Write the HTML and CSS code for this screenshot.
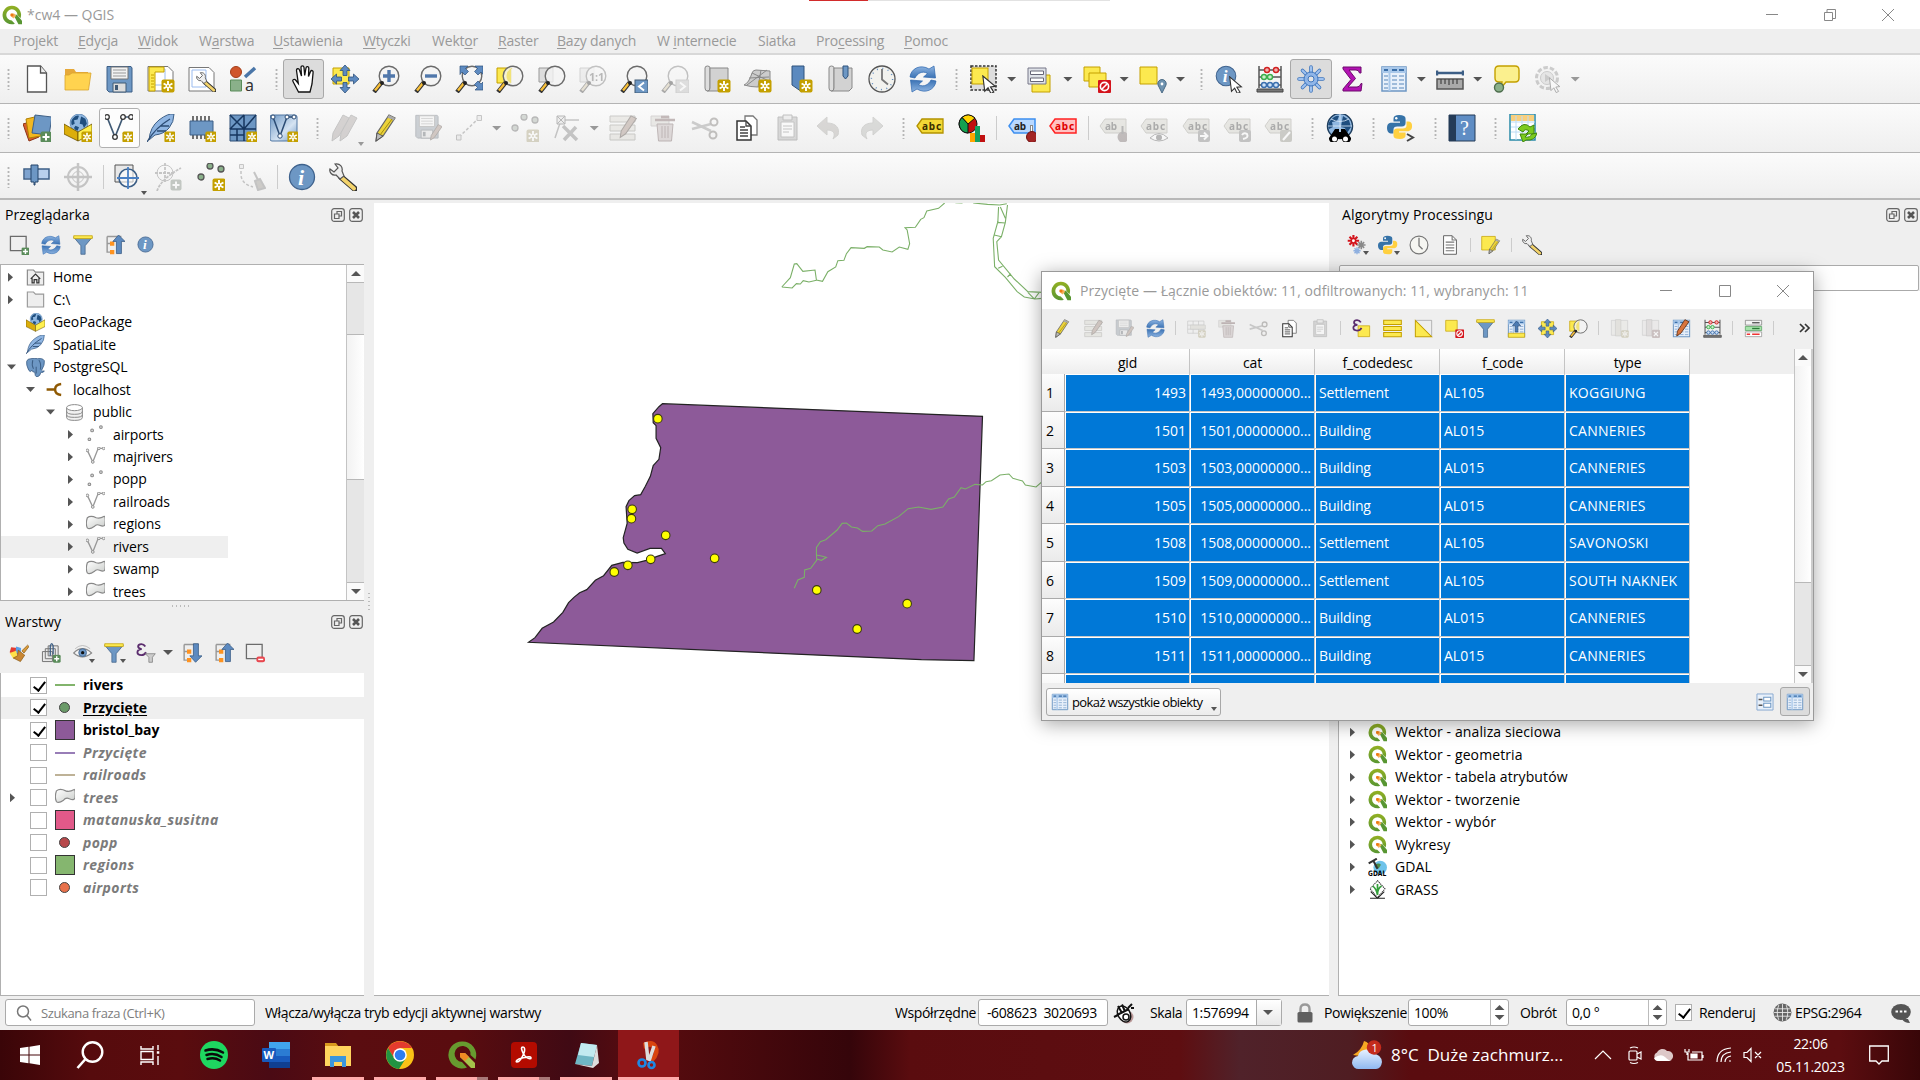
FILE: index.html
```html
<!DOCTYPE html>
<html lang="pl">
<head>
<meta charset="utf-8">
<title>*cw4 — QGIS</title>
<link rel="stylesheet" href="styles.css">
</head>
<body>
<svg class="grads" aria-hidden="true">
<defs>
<linearGradient id="gq" x1="0" y1="0" x2="0" y2="1"><stop offset="0" stop-color="#93b023"/><stop offset="1" stop-color="#589632"/></linearGradient>
<linearGradient id="gb" x1="0" y1="0" x2="0" y2="1"><stop offset="0" stop-color="#8fb5e2"/><stop offset="1" stop-color="#3a72b4"/></linearGradient>
<linearGradient id="gv" x1="0" y1="0" x2="1" y2="1"><stop offset="0" stop-color="#6d97c4"/><stop offset=".6" stop-color="#d5e3f2"/><stop offset="1" stop-color="#6d97c4"/></linearGradient>
<linearGradient id="gg" x1="0" y1="0" x2="1" y2="1"><stop offset="0" stop-color="#fff"/><stop offset="1" stop-color="#c9ccc9"/></linearGradient>
<linearGradient id="gc" x1="0" y1="0" x2="0" y2="1"><stop offset="0" stop-color="#e6f1ff"/><stop offset="1" stop-color="#8fb8f0"/></linearGradient>
</defs>
</svg>
<svg class="defs" aria-hidden="true">
<symbol id="star" viewBox="0 0 14 14"><rect x=".5" y=".5" width="13" height="13" rx="2" fill="#c4a000"/><path d="M7 2v10M2.6 4.5l8.8 5M11.4 4.5l-8.8 5" stroke="#fff" stroke-width="1.9"/><circle cx="7" cy="7" r="1" fill="#c4a000"/></symbol>
<symbol id="plus" viewBox="0 0 12 12"><rect x=".5" y=".5" width="11" height="11" rx="2" fill="#5a8c5a"/><path d="M6 2.5v7M2.5 6h7" stroke="#fff" stroke-width="2"/></symbol>
<symbol id="no" viewBox="0 0 12 12"><rect width="12" height="12" rx="1" fill="#d4141c"/><circle cx="6" cy="6" r="3.8" fill="none" stroke="#fff" stroke-width="1.5"/><path d="M3.5 8.5l5-5" stroke="#fff" stroke-width="1.5"/></symbol>
<symbol id="cur" viewBox="0 0 16 20"><path d="M1 1l13 11-5 .5 3.5 5.5-3 1.5-3-6L3 17z" fill="#fff" stroke="#333" stroke-width="1.2"/></symbol>
<symbol id="lens" viewBox="0 0 28 28"><path d="M10 17L2 27" stroke="#333" stroke-width="4.4"/><path d="M9 18L3 25.5" stroke="#f8c03a" stroke-width="2.4"/><circle cx="17" cy="11" r="9.8" fill="#f4f4f4" fill-opacity=".8" stroke="#6b6b6b" stroke-width="1.4"/><circle cx="10" cy="18" r="2" fill="#222"/></symbol>
<symbol id="qgis" viewBox="0 0 28 28"><path fill="url(#gq)" fill-rule="evenodd" d="M14 1a13 13 0 1 0 4 25.300l-4.300-4.600A7.800 7.800 0 1 1 21.600 14l4.300 4.500A13 13 0 0 0 14 1z"/><path d="M16 13.500h5L28 22v5h-5z" fill="#589632"/><path d="M12 12h5l3 3-4 4-4-4z" fill="#f7b15c"/><circle cx="14" cy="14" r="2.200" fill="#ee7913"/></symbol>
<symbol id="new" viewBox="0 0 28 28"><path d="M4.500 1h13l6 7v19h-19z" fill="#fff" stroke="#555" stroke-width="1.300"/><path d="M17.500 1v7h6" fill="#eee" stroke="#555" stroke-width="1.300"/></symbol>
<symbol id="open" viewBox="0 0 28 28"><path d="M1 4h9l2 3h12v5H6L1 24z" fill="#e6a93a"/><path d="M1 25V10h4l3-2h19l-2.500 17z" fill="#ffd34f" stroke="#d9a52c" stroke-width=".8"/></symbol>
<symbol id="save" viewBox="0 0 28 28"><path d="M2 1.500h24l1 1.500v24H4l-2-2z" fill="#6d97c4" stroke="#3d5f86"/><path d="M6 2h17v12H6z" fill="#f2f2f2" stroke="#777"/><path d="M8 5h13M8 8h13M8 11h13" stroke="#999"/><path d="M8 18h13v9H8z" fill="#ddd" stroke="#415a75"/><path d="M10 20h3v5h-3z" fill="#415a75"/></symbol>
<symbol id="layout" viewBox="0 0 28 28"><path d="M1 1.500h20l5 5V26H1z" fill="#fff" stroke="#777"/><path d="M4 4h14v16H4z" fill="none" stroke="#9bbcf0"/><path d="M2 2h15v5H8v19H2z" fill="#fce94f" stroke="#c4a000"/><path d="M4 10h3M4 13h3M4 16h3M4 19h3M4 22h3" stroke="#c4a000"/><use href="#star" x="14" y="14" width="14" height="14"/></symbol>
<symbol id="wrench" viewBox="0 0 28 28"><path d="M12 14l14 12" stroke="#333" stroke-width="6" stroke-linecap="round"/><path d="M13 15l12 10.500" stroke="#f3d36b" stroke-width="3.800" stroke-linecap="round"/><path d="M6 1c5-1 8 3 7 7l2 5-4 3-4-4c-4 1-7-3-6-6l4 3 4-4z" fill="#eee" stroke="#555" stroke-width="1.200"/></symbol>
<symbol id="manager" viewBox="0 0 28 28"><path d="M1 2.500h20l5 5V26H1z" fill="#fff" stroke="#777"/><path d="M4 5h14v17H4z" fill="none" stroke="#9bbcf0"/><use href="#wrench" x="8" y="7" width="20" height="20"/></symbol>
<symbol id="style" viewBox="0 0 28 28"><circle cx="7" cy="7" r="5.500" fill="#d0562b" stroke="#a33d18"/><path d="M16 12L26 3" stroke="#4a76a8" stroke-width="3.500"/><path d="M1.500 15h11v11h-11z" fill="#8ab08a" stroke="#5a8c5a"/><text x="16" y="25.500" font-family="Noto Sans,sans-serif" font-size="16" fill="#333">a</text></symbol>
<symbol id="hand" viewBox="0 0 28 28"><path d="M8.500 27L3 16.500c-1-2 1.500-3 3-1l2.300 3L6.500 5.500c-.3-2 2.300-2.500 3-.5L11.500 11 11 2.500c0-2.200 2.800-2.200 3 0l.7 8L16 3c.3-2 3-1.700 2.800.5L18.500 11.500l2-5c.8-1.800 3-1 2.600 1L22 19l-2 8z" fill="#fff" stroke="#111" stroke-width="1.300"/></symbol>
<symbol id="arrows4" viewBox="0 0 28 28"><g fill="#5d8ac0" stroke="#2f527c" stroke-width=".8"><path d="M14 0l5 5.500h-3v5h-4v-5H9z"/><path d="M14 28l5-5.500h-3v-5h-4v5H9zM0 14l5.500-5v3h5v4h-5v3zM28 14l-5.500-5v3h-5v4h5v3z"/></g></symbol>
<symbol id="pansel" viewBox="0 0 28 28"><path d="M2 3h16v16H2z" fill="#fce94f" stroke="#c4a000"/><use href="#arrows4"/></symbol>
<symbol id="pansel2" viewBox="0 0 28 28"><path d="M5 4h18v19H5z" fill="#fce94f" stroke="#c4a000"/><use href="#arrows4"/></symbol>
<symbol id="zin" viewBox="0 0 28 28"><use href="#lens"/><path d="M17 5v12M11 11h12" stroke="#5077ab" stroke-width="3.400"/></symbol>
<symbol id="zout" viewBox="0 0 28 28"><use href="#lens"/><path d="M11 11h12" stroke="#5077ab" stroke-width="3.400"/></symbol>
<symbol id="zfull" viewBox="0 0 28 28"><use href="#lens"/><g fill="#5d8ac0" stroke="#2f527c" stroke-width=".7"><path d="M5 1h8l-2.500 2.500 3 3-3.500 3.500-3-3L5 9.500zM28 1h-8l2.500 2.500-3 3L23 10l3-3 2 2.500zM28 25h-8l2.500-2.500-3-3L23 16l3 3 2-2z"/></g></symbol>
<symbol id="zsel" viewBox="0 0 28 28"><path d="M1 3h14v15H1z" fill="#fce94f" stroke="#c4a000"/><use href="#lens"/><path d="M17 3a8 8 0 0 0-2 15V3z" fill="#f1e379"/></symbol>
<symbol id="zlay" viewBox="0 0 28 28"><path d="M1 3h14v14H1z" fill="#ddd" stroke="#999"/><use href="#lens"/></symbol>
<symbol id="z11" viewBox="0 0 28 28"><path d="M1 3h14v14H1z" fill="#ddd" stroke="#999"/><use href="#lens"/><text x="10" y="15.500" font-family="Noto Sans,sans-serif" font-weight="bold" font-size="11" fill="#555">1:1</text></symbol>
<symbol id="zlast" viewBox="0 0 28 28"><use href="#lens"/><rect x="15" y="15" width="13" height="13" fill="#6d97c4" stroke="#415a75"/><path d="M24 17.500l-5 4 5 4" fill="none" stroke="#fff" stroke-width="2"/></symbol>
<symbol id="znext" viewBox="0 0 28 28"><use href="#lens"/><rect x="15" y="15" width="13" height="13" fill="#bbb" stroke="#999"/><path d="M19 17.500l5 4-5 4" fill="none" stroke="#fff" stroke-width="2"/></symbol>
<symbol id="map" viewBox="0 0 28 28"><path d="M2 3q0-2 2.500-2T7 3v20q0 3-2.500 3T2 23z" fill="#ddd" stroke="#888"/><path d="M7 3h18v20l-3 3H4.500q2.500 0 2.500-3z" fill="#d2d2d2" stroke="#888"/></symbol>
<symbol id="newmap" viewBox="0 0 28 28"><use href="#map"/><use href="#star" x="14" y="14" width="14" height="14"/></symbol>
<symbol id="new3d" viewBox="0 0 28 28"><path d="M0 20q5-2 8-12 1-3 4-3l14 1v14q-12 4-26 0z" fill="#ccc" stroke="#888"/><path d="M5 13l20-1M8 8l17 8M17 5l-3 17M3 20l20-15" stroke="#888" fill="none"/><use href="#star" x="14" y="14" width="14" height="14"/></symbol>
<symbol id="bookm" viewBox="0 0 28 28"><path d="M7 1h12v24l-2 2-10-7z" fill="#5b89bf" stroke="#2f527c"/><use href="#star" x="14" y="14" width="14" height="14"/></symbol>
<symbol id="mapbook" viewBox="0 0 28 28"><use href="#map"/><path d="M16 1h5v10l-2.500 3-2.500-3z" fill="#6d97c4" stroke="#2f527c"/></symbol>
<symbol id="clock" viewBox="0 0 28 28"><circle cx="14" cy="14" r="13" fill="#f2f2ee" stroke="#555" stroke-width="1.300"/><path d="M14 4v10.500l6 5" fill="none" stroke="#777" stroke-width="1.800"/><circle cx="14" cy="14" r="10.600" fill="none" stroke="#5b89bf" stroke-width="1.400" stroke-dasharray="1 4.550"/></symbol>
<symbol id="refresh" viewBox="0 0 28 28"><path d="M1 12C2 3 12-1 20 4l5-3 1.500 12-12-1 4-3.500C13 5 8 9 6 13z" fill="url(#gb)" stroke="#2c66ad" stroke-width=".7"/><path transform="rotate(180 14 14)" d="M1 12C2 3 12-1 20 4l5-3 1.500 12-12-1 4-3.500C13 5 8 9 6 13z" fill="url(#gb)" stroke="#2c66ad" stroke-width=".7"/></symbol>
<symbol id="select" viewBox="0 0 28 28"><rect x="1" y="1" width="25" height="24" fill="#ddd" stroke="#333" stroke-width="1.500" stroke-dasharray="2.500 1.500"/><rect x="2" y="3" width="16" height="16" fill="#fce94f" stroke="#c4a000"/><use href="#cur" x="11" y="10" width="17" height="19"/></symbol>
<symbol id="selval" viewBox="0 0 28 28"><path d="M6 10h18v17H6z" fill="#fce94f" stroke="#c4a000"/><path d="M2 3h18v16H2z" fill="#dfe2e8" stroke="#778"/><path d="M4.500 6h13v3.500h-13zM4.500 13h13v3.500h-13z" fill="#fff" stroke="#667"/></symbol>
<symbol id="desel" viewBox="0 0 28 28"><path d="M1 2h16v14H1z" fill="#fce94f" stroke="#c4a000"/><path d="M6 8h17v14H6z" fill="#fce94f" stroke="#c4a000"/><use href="#no" x="15" y="15" width="13" height="13"/></symbol>
<symbol id="selloc" viewBox="0 0 28 28"><path d="M1 2h17v17H1z" fill="#fce94f" stroke="#c4a000"/><path d="M23 28l-4-8a4.200 4.200 0 1 1 8 0z" fill="#6f93b0" stroke="#4a6a84"/><circle cx="23" cy="19" r="1.400" fill="#fff"/></symbol>
<symbol id="info" viewBox="0 0 28 28"><circle cx="14" cy="14" r="12.500" fill="#6d97c4" stroke="#3e628d" stroke-width="1.300"/><text x="10" y="22" font-family="Liberation Serif,serif" font-style="italic" font-weight="bold" font-size="22" fill="#fff">i</text></symbol>
<symbol id="identify" viewBox="0 0 28 28"><use href="#info" width="22" height="22"/><use href="#cur" x="13" y="11" width="16" height="18"/></symbol>
<symbol id="abacus" viewBox="0 0 28 28"><path d="M3 1v22M25 1v22M3 5h22M3 12h22M3 20h22" stroke="#555" stroke-width="1.500" fill="none"/><path d="M1 24h26v3H1z" fill="#777" stroke="#444"/><g stroke-width="1.400"><g fill="#f4b0b0" stroke="#d02020"><circle cx="11" cy="5" r="2.500"/><circle cx="20" cy="5" r="2.500"/></g><g fill="#c9efc9" stroke="#3cae4c"><circle cx="8" cy="12" r="2.500"/><circle cx="14" cy="12" r="2.500"/></g><g fill="#cfe2f7" stroke="#3b6fae"><circle cx="8" cy="20" r="2.500"/><circle cx="14" cy="20" r="2.500"/><circle cx="20" cy="20" r="2.500"/></g></g></symbol>
<symbol id="gear" viewBox="0 0 28 28"><g stroke="#3f76bd" stroke-width="3.600" stroke-linecap="round"><path d="M14 2v24M2 14h24M5.500 5.500l17 17M22.500 5.500l-17 17"/></g><g stroke="#9fc2f0" stroke-width="2" stroke-linecap="round"><path d="M14 2v24M2 14h24M5.500 5.500l17 17M22.500 5.500l-17 17"/></g><circle cx="14" cy="14" r="7" fill="#8fb5e8" stroke="#3f76bd"/><circle cx="14" cy="14" r="3" fill="#e4e4e4" stroke="#3f76bd"/></symbol>
<symbol id="sigma" viewBox="0 0 28 28"><path d="M5 2h18v6h-1.500q-.5-3-3.500-3h-7l6.500 8.500L10 22h9q3 0 4-3.500h1L23 26H5v-2l8-9.500L5 4z" fill="#b312b3" stroke="#6d0a6d"/></symbol>
<symbol id="table" viewBox="0 0 28 28"><path d="M2 2h24v24H2z" fill="#e8f0fa" stroke="#6d97c4" stroke-width="1.500"/><path d="M2 2h24v6H2z" fill="#a9c8ea"/><path d="M9.500 2v24" stroke="#a9c8ea" stroke-width="2"/><path d="M4 5h4M12 5h5M19 5h5" stroke="#3a6ea8" stroke-width="2"/><path d="M4 11h4M12 11h5M19 11h5M4 15h4M12 15h5M19 15h5M4 19h4M12 19h5M19 19h5M4 23h4M12 23h5M19 23h5" stroke="#87a9d0" stroke-width="1.300"/></symbol>
<symbol id="ruler" viewBox="0 0 28 28"><path d="M1 5.500v5M27 5.500v5M1 8h26" stroke="#3d5f86" stroke-width="2.400"/><path d="M1 14h26v10H1z" fill="#aaa" stroke="#555" stroke-width="1.500"/><path d="M5 14v5M9 14v5M13 14v6M17 14v5M21 14v5" stroke="#444" stroke-width="1.200"/></symbol>
<symbol id="tip" viewBox="0 0 28 28"><path d="M7 1h16q4 0 4 4v8q0 4-4 4h-9l-5 6 1-6H7q-4 0-4-4V5q0-4 4-4z" fill="#fbf08e" stroke="#c4a000" stroke-width="1.400"/><circle cx="7" cy="22.500" r="4.500" fill="#8ab08a" stroke="#4e6e4e" stroke-width="1.400"/></symbol>
<symbol id="action" viewBox="0 0 28 28"><circle cx="13" cy="13" r="10.500" fill="#eee" stroke="#888" stroke-width="3" stroke-dasharray="4.500 2"/><circle cx="13" cy="13" r="6.500" fill="#ccc" stroke="#888"/><path d="M11 9l6 4-6 4z" fill="#888"/><use href="#cur" x="14" y="12" width="14" height="16"/></symbol>
<symbol id="dsm" viewBox="0 0 28 28"><path d="M0 10l10-3 6 16-10 4z" fill="#d95c2e" stroke="#8c3415"/><path d="M3 5l13-3 2 20-12 2z" fill="#f2b720" stroke="#b08000"/><path d="M12 1l17 2-3 18-17-2z" fill="#6d97c4" stroke="#3d5f86"/><use href="#plus" x="17" y="17" width="12" height="12"/></symbol>
<symbol id="globe" viewBox="0 0 28 28"><circle cx="14" cy="14" r="12.500" fill="#8fb7e0" stroke="#4c78a8"/><path d="M5 8q5-6 9-4l-2 5-5 1 1 5-4 2q-2-5 1-9zM17 5l6 3 2 7-4 6-2-5-4-1 1-6zM9 18l5 2-2 5q-4-1-5-4z" fill="#1f4e7e"/></symbol>
<symbol id="gpkg" viewBox="0 0 28 28"><use href="#globe" x="5" y="-1" width="20" height="20"/><path d="M0 10l14 8v9L0 20z" fill="#dcae0b" stroke="#6b5200" stroke-width=".8"/><path d="M14 18l14-8v10l-14 7z" fill="#fff04f" stroke="#6b5200" stroke-width=".8"/></symbol>
<symbol id="newgpkg" viewBox="0 0 28 28"><use href="#gpkg"/><use href="#star" x="17" y="17" width="12" height="12"/></symbol>
<symbol id="vee" viewBox="0 0 28 28"><path d="M2 3l8 20L18 3h8" fill="none" stroke="#415a75" stroke-width="1.700"/><g fill="#fff" stroke="#333" stroke-width="1.300"><circle cx="2" cy="3" r="2.300"/><circle cx="10" cy="23" r="2.300"/><circle cx="18" cy="3" r="2.300"/><circle cx="26" cy="3" r="2.300"/></g></symbol>
<symbol id="newshp" viewBox="0 0 28 28"><use href="#vee"/><use href="#star" x="17" y="17" width="12" height="12"/></symbol>
<symbol id="feather" viewBox="0 0 28 28"><path d="M2 26Q3 13 12 6T27 0q0 8-5 14T8 21z" fill="#8fb5e2" stroke="#3d5f86"/><path d="M0 28Q8 14 23 5M10 17h9M13 12h9" stroke="#2c4c74" fill="none" stroke-width="1.300"/></symbol>
<symbol id="newspl" viewBox="0 0 28 28"><use href="#feather"/><use href="#star" x="17" y="17" width="12" height="12"/></symbol>
<symbol id="newmem" viewBox="0 0 28 28"><path d="M5 2v23M9 2v23M13 2v23M17 2v23M21 2v23" stroke="#444" stroke-width="1.500"/><path d="M2 7h23v14H2z" fill="#6d97c4" stroke="#3d5f86"/><use href="#star" x="17" y="17" width="12" height="12"/></symbol>
<symbol id="newmesh" viewBox="0 0 28 28"><path d="M1 1h26v26H1z" fill="#6d97c4" stroke="#2c4c74"/><path d="M1 1l14 14M15 1L1 15M15 1v26M1 15h26M27 1L15 15M8 15v12M1 21h14" stroke="#16365f" stroke-width="1.500"/><use href="#star" x="17" y="17" width="12" height="12"/></symbol>
<symbol id="newvirt" viewBox="0 0 28 28"><rect x="0" y="1" width="27" height="26" rx="2" fill="url(#gv)" stroke="#5077a3"/><path d="M3 3l7 19L17 3h7" stroke="#2c4c74" stroke-width="1.500" fill="none"/><g fill="#fff" stroke="#2c4c74"><circle cx="3" cy="3" r="2"/><circle cx="10" cy="22" r="2.200"/><circle cx="17" cy="3" r="2"/><circle cx="24" cy="3" r="2"/></g><use href="#star" x="17" y="17" width="12" height="12"/></symbol>
<symbol id="pen" viewBox="0 0 28 28"><path d="M17 1l6 3L11 22l-7 5 1-8z" fill="#ecd33a" stroke="#666" stroke-width="1.200"/><path d="M17 1l6 3-1.500 2.500-6-3z" fill="#aaa"/><path d="M5 19l6 3-7 5z" fill="#bbb" stroke="#555"/><path d="M20 5L8 21" stroke="#a08a10"/></symbol>
<symbol id="pens" viewBox="0 0 28 28"><path d="M12 1l6 3L8 22l-7 5 1-8z" fill="#b5938a" stroke="#777"/><path d="M20 1l6 3-10 18-7 5 1-8z" fill="#b5938a" stroke="#777"/></symbol>
<symbol id="penr" viewBox="0 0 28 28"><path d="M19 1l6 3L13 21l-6 4 1-7z" fill="#d8743e" stroke="#5d2c10" stroke-width="1.200"/></symbol>
<symbol id="saveed" viewBox="0 0 28 28"><use href="#save" width="25" height="25"/><use href="#penr" x="12" y="10" width="18" height="18"/></symbol>
<symbol id="digi" viewBox="0 0 28 28"><path d="M4 23L24 4" stroke="#777" stroke-dasharray="3 2" stroke-width="1.500"/><path d="M1.500 21h4.500v5H1.500zM22 1.500h4.500v5H22z" fill="#ddd" stroke="#777"/></symbol>
<symbol id="pts" viewBox="0 0 28 28"><g fill="#8ab08a" stroke="#555" stroke-width="1.300"><circle cx="4" cy="14" r="3"/><circle cx="13" cy="3" r="3"/><circle cx="24" cy="6" r="3"/></g><use href="#star" x="15" y="15" width="14" height="14"/></symbol>
<symbol id="vertex" viewBox="0 0 28 28"><path d="M8 6h18M8 6L2 24" stroke="#777" stroke-width="1.500"/><path d="M4 2h8v8H4z" fill="#ddd" stroke="#555"/><path d="M4 2l8 8M12 2l-8 8" stroke="#555"/><path d="M11 26l12-13M10 12l14 14" stroke="#777" stroke-width="3.500"/></symbol>
<symbol id="multi" viewBox="0 0 28 28"><path d="M1 2h25v6H1zM1 11h25v6H1zM1 20h25v6H1z" fill="#ddd6b4" stroke="#8a8468"/><use href="#penr" x="5" y="1" width="25" height="25"/></symbol>
<symbol id="trash" viewBox="0 0 28 28"><path d="M1 2h18v10H1z" fill="#d8d0b8" stroke="#a99"/><path d="M5 6h20M11 3h8" stroke="#a44" stroke-width="2.500"/><path d="M7 10h16l-1.500 17h-13z" fill="#d9a3a3" stroke="#944"/><path d="M12 12v12M15 12v12M18 12v12" stroke="#944"/></symbol>
<symbol id="cut" viewBox="0 0 28 28"><path d="M1 8l19 9M1 15l19-5" stroke="#888" stroke-width="2.500"/><circle cx="23" cy="8" r="3.500" fill="none" stroke="#765" stroke-width="2"/><circle cx="22" cy="21" r="3.500" fill="none" stroke="#765" stroke-width="2"/></symbol>
<symbol id="copy" viewBox="0 0 28 28"><path d="M12 2h8l4 4v15H12z" fill="#fff" stroke="#777" stroke-width="1.300"/><path d="M4 7h9l5 5v14H4z" fill="#fff" stroke="#333" stroke-width="1.500"/><path d="M13 7v5h5M7 13h5M7 16h8M7 19h8M7 22h8" fill="none" stroke="#444" stroke-width="1.300"/></symbol>
<symbol id="paste" viewBox="0 0 28 28"><path d="M4 3h19v23H4z" fill="#aaa" stroke="#666"/><path d="M9 1h9v5H9z" fill="#ddd" stroke="#666"/><path d="M7 8h13v15H7z" fill="#fff" stroke="#777"/><path d="M9 12h9M9 15h9M9 18h6" stroke="#777"/></symbol>
<symbol id="undo" viewBox="0 0 28 28"><path d="M2 12L12 3v6c9 0 13 5 11 12l-5 4c3-6 0-9-6-9v5z" fill="#b3a392" stroke="#998"/></symbol>
<symbol id="redo" viewBox="0 0 28 28"><path d="M26 12L16 3v6C7 9 3 14 5 21l5 4c-3-6 0-9 6-9v5z" fill="#a9b0a0" stroke="#998"/></symbol>
<symbol id="abc" viewBox="0 0 28 28"><path d="M1 12l5-7h21v14H6z" fill="#f3d936" stroke="#b39200" stroke-width="1.300"/><text x="6" y="16" font-family="Noto Sans,sans-serif" font-weight="bold" font-size="10" fill="#3a3000" textLength="19">abc</text></symbol>
<symbol id="abcr" viewBox="0 0 28 28"><path d="M1 12l5-7h21v14H6z" fill="#ffc2c2" stroke="#f22" stroke-width="1.500"/><text x="6" y="16" font-family="Noto Sans,sans-serif" font-weight="bold" font-size="10" fill="#e00000" textLength="19">abc</text></symbol>
<symbol id="abcb" viewBox="0 0 28 28"><path d="M1 12l5-7h21v14H6z" fill="#b9d8ff" stroke="#3d8ff0" stroke-width="1.500"/><text x="6" y="16" font-family="Noto Sans,sans-serif" font-weight="bold" font-size="10" fill="#222">ab</text><path d="M23.500 11v9" stroke="#888" stroke-width="3"/><path d="M23.500 12v8" stroke="#fff"/><circle cx="24" cy="23" r="5.500" fill="#a32626" stroke="#6e1111"/></symbol>
<symbol id="tag" viewBox="0 0 28 28"><path d="M1 12l5-7h21v14H6z" fill="#d3cfa4" stroke="#98946e"/><text x="6" y="16" font-family="Noto Sans,sans-serif" font-weight="bold" font-size="10" fill="#333" textLength="19">abc</text></symbol>
<symbol id="tagpin" viewBox="0 0 28 28"><path d="M1 12l5-7h21v14H6z" fill="#d3cfa4" stroke="#98946e"/><text x="6" y="16" font-family="Noto Sans,sans-serif" font-weight="bold" font-size="10" fill="#333">ab</text><circle cx="24" cy="23" r="5.500" fill="#8a5a5a"/><path d="M23.500 12v8" stroke="#555" stroke-width="2"/></symbol>
<symbol id="tageye" viewBox="0 0 28 28"><use href="#tag"/><path d="M10 24q9-9 18 0-9 6-18 0z" fill="#fff" stroke="#555"/><circle cx="19" cy="23.500" r="3" fill="#555"/></symbol>
<symbol id="tagmov" viewBox="0 0 28 28"><use href="#tag"/><rect x="16" y="16" width="12" height="12" rx="2" fill="#777"/><path d="M18 22h6M22 18.500l3.500 3.500-3.500 3.500" stroke="#fff" stroke-width="2" fill="none"/></symbol>
<symbol id="tagrot" viewBox="0 0 28 28"><use href="#tag"/><rect x="16" y="16" width="12" height="12" rx="2" fill="#777"/><path d="M20 25q6-1 4-5-3-2-5 1" stroke="#fff" stroke-width="2" fill="none"/></symbol>
<symbol id="taged" viewBox="0 0 28 28"><use href="#tag"/><rect x="16" y="16" width="12" height="12" rx="2" fill="#8d8c60"/><path d="M19 26l7-8" stroke="#fff" stroke-width="2"/></symbol>
<symbol id="diag" viewBox="0 0 28 28"><circle cx="10" cy="10" r="9" fill="#c01010" stroke="#111"/><path d="M10 10L4 3.500Q10-2 17 4z" fill="#ffd400" stroke="#111"/><path d="M10 10v9A9 9 0 0 1 4 3.500z" fill="#14a050" stroke="#111"/><path d="M12 19h5v9h-5z" fill="#ffa500"/><path d="M17 12h5v16h-5z" fill="#14a060"/><path d="M22 21h5v7h-5z" fill="#c01010"/></symbol>
<symbol id="metas" viewBox="0 0 28 28"><circle cx="14" cy="12" r="12.500" fill="#8fb7e0" stroke="#1f3e5e" stroke-width="1.500"/><path d="M4 7q5-6 9-5l-2 5-5 1 1 5-4 2q-2-5 1-8zM17 2l6 4 2 7-4 6-2-5-4-1 1-6z" fill="#1f4e7e"/><path d="M2 12h24M14 0v24M5 5q9 5 18 0" stroke="#dcebfa" fill="none" stroke-width=".8"/><path d="M9 15h4v3h2v-3h4l6 9a4.500 4.500 0 1 1-9 1h-4a4.500 4.500 0 1 1-9-1z" fill="#000"/><circle cx="8.500" cy="25" r="2.500" fill="#fff"/><circle cx="19.500" cy="25" r="2.500" fill="#fff"/></symbol>
<symbol id="py" viewBox="0 0 28 28"><path d="M13 1q-6 0-6 4v3h7v1.500H4Q0 10 0 15t4 6h3v-4q0-3.500 4-3.500h5q4 0 4-4V5q0-4-7-4z" fill="#3673a8"/><path d="M14 27q6 0 6-4v-3h-7v-1.500h10q4-.5 4-5.500t-4-5h-2v4q0 3.500-4 3.500h-6q-4 0-4 4v4q0 3.500 7 3.500z" fill="#ffd040"/><circle cx="10" cy="4.500" r="1.300" fill="#fff"/></symbol>
<symbol id="pycon" viewBox="0 0 28 28"><use href="#py" width="26" height="26"/><path d="M20 20l6 3.500-6 3.500" fill="none" stroke="#444" stroke-width="2"/></symbol>
<symbol id="book" viewBox="0 0 28 28"><path d="M1 1h26v26H1z" fill="#5f8dc4" stroke="#243b57"/><path d="M1 1h7v26H1z" fill="#243b57"/><text x="12" y="20.500" font-family="Liberation Serif,serif" font-size="20" fill="#fff">?</text></symbol>
<symbol id="tabref" viewBox="0 0 28 28"><path d="M1 0h25v26H1z" fill="#fff" stroke="#2a8aa8" stroke-width="1.500"/><path d="M2 1h23v6H2z" fill="#f9cf7c"/><path d="M2 8h24M2 13h24M2 18h24M7 2v24M13 2v24M19 2v24" stroke="#bcdcf5"/><path d="M9 15q6-8 12-2l4-2v9h-8l3-3q-4-3-6 1z" fill="#7bcb1e" stroke="#3f8510"/><path d="M28 19q-2 8-11 7l-3 2-3-8h8l-3 3q5 1 7-3z" fill="#7bcb1e" stroke="#3f8510"/></symbol>
<symbol id="tracker" viewBox="0 0 28 28"><path d="M1 6h25v10H1z" fill="#b8cfec" stroke="#3d5f86" stroke-width="1.500"/><path d="M2 7h6v8H2z" fill="#7ea3cf"/><path d="M8 2h7v17h-3v3h-1v-3H8z" fill="#6d97c4" stroke="#24446b"/></symbol>
<symbol id="target" viewBox="0 0 28 28"><circle cx="14" cy="14" r="10" fill="none" stroke="#777" stroke-width="2"/><circle cx="14" cy="14" r="5.500" fill="none" stroke="#777"/><path d="M14 0v28M0 14h28" stroke="#777" stroke-width="2.500"/></symbol>
<symbol id="snap" viewBox="0 0 28 28"><path d="M1 2h18v17H1z" fill="#e8e8e8" stroke="#555"/><circle cx="14" cy="15" r="9" fill="#fff" fill-opacity=".6" stroke="#3d5f86" stroke-width="1.600"/><path d="M14 4v22M3 15h22" stroke="#4a80c4" stroke-width="1.800"/></symbol>
<symbol id="targetp" viewBox="0 0 28 28"><circle cx="10" cy="10" r="8" fill="none" stroke="#777"/><path d="M10 0v20M0 10h20M2 28Q6 16 26 5" stroke="#777" stroke-width="1.800" fill="none" stroke-dasharray="3 1"/><use href="#plus" x="15" y="16" width="12" height="12"/></symbol>
<symbol id="broom" viewBox="0 0 28 28"><path d="M3 3v8q0 10 12 13" stroke="#777" stroke-dasharray="3 2" fill="none" stroke-width="1.500"/><path d="M1.500 1.500h4v4h-4z" fill="#ddd" stroke="#777"/><path d="M16 9l4 8M17 18l5-2 5 9-7 2z" stroke="#777" fill="#998a70" stroke-width="2"/></symbol>
<symbol id="addlay" viewBox="0 0 28 28"><path d="M2 2h22v20H2z" fill="#efefef" stroke="#6b6b6b" stroke-width="1.800"/><use href="#plus" x="17" y="17" width="12" height="12"/></symbol>
<symbol id="remlay" viewBox="0 0 28 28"><path d="M2 2h22v20H2z" fill="#efefef" stroke="#6b6b6b" stroke-width="1.800"/><rect x="16" y="19" width="12" height="8" rx="3" fill="#e8474f"/><path d="M18.500 23h7" stroke="#fff" stroke-width="2"/></symbol>
<symbol id="funnel" viewBox="0 0 28 28"><path d="M1 3h26L17 15v12h-6V15z" fill="#6d97c4" stroke="#3d5f86"/><path d="M1 1h26v4H1z" fill="#fce94f" stroke="#c4a000"/></symbol>
<symbol id="tree" viewBox="0 0 28 28"><path d="M3 2v22h6M3 2h20M3 12h6" stroke="#999" stroke-width="2" fill="none"/><path d="M7 9h6v6H7zM7 21h6v6H7z" fill="#ff9320"/></symbol>
<symbol id="collapse" viewBox="0 0 28 28"><use href="#tree"/><path d="M19 0l9 9h-5v17h-7V9h-5z" fill="#5d8ac0" stroke="#2f527c"/></symbol>
<symbol id="expand" viewBox="0 0 28 28"><use href="#tree"/><path d="M19 27l9-9h-5V1h-7v17h-5z" fill="#5d8ac0" stroke="#2f527c"/></symbol>
<symbol id="brush" viewBox="0 0 28 28"><path d="M3 6l9 1 3 8-8 3-6-5z" fill="#e33b30"/><path d="M10 5l7 2-1 9-7-2z" fill="#5aa0e8"/><path d="M1 14l9-3 2 8-6 3z" fill="#ffe14a"/><path d="M18 11l8-8 2 2-7 9z" fill="#d99a3a" stroke="#8a5a14"/><path d="M13 10l9 7-6 9-10-5 6-3z" fill="#c98632" stroke="#8a5a14"/></symbol>
<symbol id="addgrp" viewBox="0 0 28 28"><path d="M10 4h14v14H10zM6 8h14v14H6zM2 12h14v14H2z" fill="#e9e9e9" stroke="#777" stroke-width="1.400"/><path d="M13 18V4q2-6 4 0v12" fill="none" stroke="#3d5f86" stroke-width="1.800"/><use href="#plus" x="16" y="16" width="12" height="12"/></symbol>
<symbol id="eye" viewBox="0 0 28 28"><path d="M1 14Q13 2 26 14 13 25 1 14z" fill="#f4f4f4" stroke="#888" stroke-width="1.600"/><circle cx="13.500" cy="13.500" r="5.500" fill="#6d97c4" stroke="#3d5f86"/><circle cx="13.500" cy="13.500" r="2.300" fill="#111"/><path d="M3 8Q13-1 24 8" fill="none" stroke="#aaa"/></symbol>
<symbol id="epsilon" viewBox="0 0 28 28"><path d="M13 5Q11 1.500 7.500 1.500 3 1.500 3 5q0 3 5 3.500Q2 9 2 13t5.500 4Q12 17 14 13" fill="none" stroke="#5b2d6e" stroke-width="2.600"/></symbol>
<symbol id="eps" viewBox="0 0 28 28"><use href="#epsilon"/><path d="M13 15h14l-4 5v7h-5v-7z" fill="#ccc" stroke="#777"/></symbol>
<symbol id="epsy" viewBox="0 0 28 28"><path d="M9 10h17v16H9z" fill="#fce94f" stroke="#c4a000"/><use href="#epsilon"/></symbol>
<symbol id="selall" viewBox="0 0 28 28"><path d="M1 2h26v6H1zM1 11h26v6H1zM1 20h26v6H1z" fill="#fce94f" stroke="#c4a000" stroke-width="1.500"/></symbol>
<symbol id="invert" viewBox="0 0 28 28"><path d="M2 2h24v24z" fill="#eee" stroke="#999"/><path d="M2 2v24h24z" fill="#fce94f" stroke="#c4a000" stroke-width="1.500"/></symbol>
<symbol id="desel1" viewBox="0 0 28 28"><path d="M1 2h17v16H1z" fill="#fce94f" stroke="#c4a000"/><use href="#no" x="15" y="15" width="13" height="13"/></symbol>
<symbol id="totop" viewBox="0 0 28 28"><use href="#table"/><path d="M2 21h24v6H2z" fill="#fce94f" stroke="#c4a000"/><path d="M14 3l6 7h-4v9h-4v-9H8z" fill="#4c7bb3" stroke="#2f527c"/></symbol>
<symbol id="addrow" viewBox="0 0 28 28"><path d="M1 3h24v18H1zM1 9h24M1 15h24M9 3v18M17 3v18" fill="#eee" stroke="#888"/><path d="M5 9h22v6H5z" fill="#d6cf9d" stroke="#998"/><use href="#star" x="16" y="16" width="12" height="12"/></symbol>
<symbol id="field" viewBox="0 0 28 28"><path d="M2 2h24v22H2z" fill="#e6e2d6" stroke="#999"/><path d="M8 1h8v24H8z" fill="#d6cf9d" stroke="#998"/><use href="#star" x="16" y="16" width="12" height="12"/></symbol>
<symbol id="delfield" viewBox="0 0 28 28"><path d="M2 2h24v22H2z" fill="#e8dede" stroke="#999"/><path d="M8 1h8v24H8z" fill="#d9b9b9" stroke="#988"/><rect x="16" y="16" width="12" height="12" rx="2" fill="#c66"/><path d="M19 19l6 6M25 19l-6 6" stroke="#fff" stroke-width="2"/></symbol>
<symbol id="tabed" viewBox="0 0 28 28"><use href="#table"/><use href="#penr" x="0" y="0" width="28" height="28"/></symbol>
<symbol id="cond" viewBox="0 0 28 28"><path d="M2 2h24v7H2z" fill="#f4f4f4" stroke="#777"/><path d="M2 11h24v6H2z" fill="#a6e3ab" stroke="#4b9a54"/><path d="M2 19h24v7H2z" fill="#fff" stroke="#888"/><path d="M12 5.500h11" stroke="#555" stroke-width="2"/><path d="M12 14h11" stroke="#2e7a3a" stroke-width="2"/><path d="M4 22.500h5M12 22.500h11" stroke="#e33" stroke-width="2"/></symbol>
<symbol id="form" viewBox="0 0 28 28"><path d="M1.500 1.500h25v25h-25z" fill="#e8f0fa" stroke="#87a9d0" stroke-width="1.500"/><path d="M4 10h6M4 19h6" stroke="#555" stroke-width="2.200"/><path d="M12 6.500h11v6H12zM12 16h11v6H12z" fill="#fff" stroke="#6d97c4" stroke-width="1.600"/></symbol>
<symbol id="gears" viewBox="0 0 28 28"><g fill="none"><g stroke="#d3141c" stroke-width="3"><path d="M9 0v16M1 8h16M3.500 2.500l11 11M14.500 2.500l-11 11"/></g><g stroke="#8a8a8a" stroke-width="2.200"><path d="M20 8v12M14 14h12M16 10l8 8M24 10l-8 8"/></g><g stroke="#8fb0e0" stroke-width="2"><path d="M14 17v10M9 22h10M10.500 18.500l7 7M17.500 18.500l-7 7"/></g></g><circle cx="9" cy="8" r="2" fill="#fff"/></symbol>
<symbol id="log" viewBox="0 0 28 28"><path d="M5 1h12l6 6v20H5z" fill="#fff" stroke="#666" stroke-width="1.400"/><path d="M17 1v6h6M8 10h12M8 14h12M8 18h12M8 22h12" fill="none" stroke="#777" stroke-width="1.600"/></symbol>
<symbol id="clock2" viewBox="0 0 28 28"><circle cx="14" cy="14" r="12.500" fill="#f6f6f2" stroke="#777" stroke-width="1.600"/><path d="M14 4v11l5 5" fill="none" stroke="#777" stroke-width="1.800"/></symbol>
<symbol id="edsel" viewBox="0 0 28 28"><path d="M1 2h19v19H1z" fill="#fce94f" stroke="#c4a000"/><use href="#pen" x="8" y="4" width="22" height="24"/></symbol>
<symbol id="fhome" viewBox="0 0 28 28"><path d="M2 3h9l3 3h12v19H2z" fill="#eee" stroke="#888" stroke-width="1.700"/><path d="M7 16l7-7 7 7M9 15v7h3v-5h4v5h3v-7" fill="none" stroke="#333" stroke-width="1.800"/></symbol>
<symbol id="folder" viewBox="0 0 28 28"><path d="M2 3h9l3 3h12v19H2z" fill="#eee" stroke="#999" stroke-width="1.700"/></symbol>
<symbol id="pg" viewBox="0 0 28 28"><path d="M7 1Q14 0 17 1q8-1 10 3 1 6-4 14 1 2 4 1-1 3-5 2-1 6-6 7-3-1-3-7-4 0-4-3-3 4-5 0Q0 10 1 5q1-4 6-4z" fill="#6d97c4" stroke="#3d5f86" stroke-width="1.200"/><path d="M10 3Q8 10 11 16M19 3q4 6 2 14M15 13v10" stroke="#3d5f86" stroke-width="1.500" fill="none"/></symbol>
<symbol id="conn" viewBox="0 0 28 28"><path d="M1 14h13M25 5Q15 6 15 14t10 9" fill="none" stroke="#8f5902" stroke-width="4"/></symbol>
<symbol id="db" viewBox="0 0 28 28"><path d="M1 6v16q0 5 13 5t13-5V6" fill="#f0f0f0" stroke="#888" stroke-width="1.600"/><ellipse cx="14" cy="6" rx="13" ry="5" fill="#fff" stroke="#888" stroke-width="1.600"/><path d="M1 12q0 5 13 5t13-5M1 18q0 4 13 4t13-4" fill="none" stroke="#888" stroke-width="1.600"/></symbol>
<symbol id="tpts" viewBox="0 0 28 28"><g fill="#ddd" stroke="#888" stroke-width="1.500"><circle cx="5" cy="21" r="2"/><circle cx="9" cy="8" r="2"/><circle cx="22" cy="3" r="2"/></g></symbol>
<symbol id="tline" viewBox="0 0 28 28"><path d="M2 5l8 17L18 2h8" fill="none" stroke="#999" stroke-width="2"/><g fill="#eee" stroke="#888" stroke-width="1.300"><circle cx="2" cy="5" r="2"/><circle cx="10" cy="22" r="2"/><circle cx="19" cy="2" r="2"/><circle cx="26" cy="2" r="2"/></g></symbol>
<symbol id="tpoly" viewBox="0 0 28 28"><path d="M2 4q5-4 13 0 5 2 12-2 2 1 1 12-1 4-8 1-5-2-8 2-7 5-10 2-3-6 0-15z" fill="url(#gg)" stroke="#888" stroke-width="1.700"/></symbol>
<symbol id="gdal" viewBox="0 0 28 28"><circle cx="18" cy="14" r="10" fill="#6fc3ea"/><path d="M10 10q6-4 9 0l-3 5-5-1z" fill="#4a8a48"/><path d="M1 8l12-7M8 4l6 12" stroke="#333" stroke-width="3"/><text x="0" y="27" font-family="DejaVu Sans,sans-serif" font-weight="bold" font-size="11" textLength="27" lengthAdjust="spacingAndGlyphs">GDAL</text></symbol>
<symbol id="grass" viewBox="0 0 28 28"><path d="M14 1l11 12-11 13L3 13z" fill="#fff" stroke="#333" stroke-width="1.500" stroke-dasharray="2 1"/><path d="M14 22Q12 12 7 9M14 22q0-10 6-13M14 20V6" stroke="#35a03c" stroke-width="2.500" fill="none"/><path d="M4 17l10 10 10-10M3 27h22" stroke="#222" stroke-width="1.500" fill="none"/></symbol>
<symbol id="float" viewBox="0 0 14 14"><rect x=".7" y=".7" width="12.600" height="12.600" rx="2.500" fill="none" stroke="#666" stroke-width="1.200"/><path d="M3.500 6h4.500v4.500H3.500zM6 6V3.500h4.500V8H8" fill="none" stroke="#666" stroke-width="1.200"/></symbol>
<symbol id="close" viewBox="0 0 14 14"><rect x=".7" y=".7" width="12.600" height="12.600" rx="2.500" fill="none" stroke="#666" stroke-width="1.200"/><path d="M4 4l6 6M10 4l-6 6" stroke="#555" stroke-width="2.600"/></symbol>
</svg>

<header class="title">
  <svg class="logo"><use href="#qgis"/></svg><span class="t">*cw4 — QGIS</span>
  <i class="strip"><b></b></i>
  <div class="wc"><svg viewBox="0 0 12 12"><path d="M0 5.500h12"/></svg><svg viewBox="0 0 12 12"><path d="M.5 3.500h8v8h-8zM3 3.500v-3h8.500v9H9"/></svg><svg viewBox="0 0 12 12"><path d="M0 0l12 12M12 0L0 12"/></svg></div>
</header>
<nav class="menu">
  <span class="m1">Pro<u>j</u>ekt</span><span class="m2"><u>E</u>dycja</span><span class="m3"><u>W</u>idok</span><span class="m4">W<u>a</u>rstwa</span><span class="m5"><u>U</u>stawienia</span><span class="m6"><u>W</u>tyczki</span><span class="m7">Wekt<u>o</u>r</span><span class="m8"><u>R</u>aster</span><span class="m9"><u>B</u>azy danych</span><span class="m10">W <u>i</u>nternecie</span><span class="m11">Siatka</span><span class="m12">Pro<u>c</u>essing</span><span class="m13"><u>P</u>omoc</span>
</nav>
<div class="bar">
  <i class="h first"></i>
  <b class="k"><svg><use href="#new"/></svg></b><b class="k"><svg><use href="#open"/></svg></b><b class="k"><svg><use href="#save"/></svg></b><b class="k"><svg><use href="#layout"/></svg></b><b class="k"><svg><use href="#manager"/></svg></b><b class="k"><svg><use href="#style"/></svg></b>
  <i class="h"></i>
  <b class="k down"><svg><use href="#hand"/></svg></b><b class="k"><svg><use href="#pansel"/></svg></b><b class="k"><svg><use href="#zin"/></svg></b><b class="k"><svg><use href="#zout"/></svg></b><b class="k"><svg><use href="#zfull"/></svg></b><b class="k"><svg><use href="#zsel"/></svg></b><b class="k"><svg><use href="#zlay"/></svg></b><b class="k off"><svg><use href="#z11"/></svg></b><b class="k"><svg><use href="#zlast"/></svg></b><b class="k off"><svg><use href="#znext"/></svg></b><b class="k"><svg><use href="#newmap"/></svg></b><b class="k"><svg><use href="#new3d"/></svg></b><b class="k"><svg><use href="#bookm"/></svg></b><b class="k"><svg><use href="#mapbook"/></svg></b><b class="k"><svg><use href="#clock"/></svg></b><b class="k"><svg><use href="#refresh"/></svg></b>
  <i class="h"></i>
  <b class="k"><svg><use href="#select"/></svg></b><i class="a"></i><b class="k"><svg><use href="#selval"/></svg></b><i class="a"></i><b class="k"><svg><use href="#desel"/></svg></b><i class="a"></i><b class="k"><svg><use href="#selloc"/></svg></b><i class="a"></i>
  <i class="h"></i>
  <b class="k"><svg><use href="#identify"/></svg></b><b class="k"><svg><use href="#abacus"/></svg></b><b class="k down"><svg><use href="#gear"/></svg></b><b class="k"><svg><use href="#sigma"/></svg></b><b class="k"><svg><use href="#table"/></svg></b><i class="a"></i><b class="k"><svg><use href="#ruler"/></svg></b><i class="a"></i><b class="k"><svg><use href="#tip"/></svg></b><b class="k off"><svg><use href="#action"/></svg></b><i class="a dim"></i>
</div>
<div class="bar">
  <i class="h first"></i>
  <b class="k"><svg><use href="#dsm"/></svg></b><b class="k"><svg><use href="#newgpkg"/></svg></b><b class="k hot"><svg><use href="#newshp"/></svg></b><b class="k"><svg><use href="#newspl"/></svg></b><b class="k"><svg><use href="#newmem"/></svg></b><b class="k"><svg><use href="#newmesh"/></svg></b><b class="k"><svg><use href="#newvirt"/></svg></b>
  <i class="h"></i>
  <b class="k off sub"><svg><use href="#pens"/></svg></b><b class="k"><svg><use href="#pen"/></svg></b><b class="k off"><svg><use href="#saveed"/></svg></b><b class="k off"><svg><use href="#digi"/></svg></b><i class="a dim"></i><b class="k off"><svg><use href="#pts"/></svg></b><b class="k off"><svg><use href="#vertex"/></svg></b><i class="a dim"></i><b class="k off"><svg><use href="#multi"/></svg></b><b class="k off"><svg><use href="#trash"/></svg></b><b class="k off"><svg><use href="#cut"/></svg></b><b class="k"><svg><use href="#copy"/></svg></b><b class="k off"><svg><use href="#paste"/></svg></b><b class="k off"><svg><use href="#undo"/></svg></b><b class="k off"><svg><use href="#redo"/></svg></b>
  <i class="h tight"></i>
  <b class="k"><svg><use href="#abc"/></svg></b><b class="k"><svg><use href="#diag"/></svg></b><i class="s"></i><b class="k"><svg><use href="#abcb"/></svg></b><b class="k"><svg><use href="#abcr"/></svg></b><i class="s"></i><b class="k off"><svg><use href="#tagpin"/></svg></b><b class="k off"><svg><use href="#tageye"/></svg></b><b class="k off"><svg><use href="#tagmov"/></svg></b><b class="k off"><svg><use href="#tagrot"/></svg></b><b class="k off"><svg><use href="#taged"/></svg></b>
  <i class="h wide"></i><b class="k"><svg><use href="#metas"/></svg></b>
  <i class="h wide"></i><b class="k"><svg><use href="#pycon"/></svg></b>
  <i class="h wide"></i><b class="k"><svg><use href="#book"/></svg></b>
  <i class="h"></i><b class="k"><svg><use href="#tabref"/></svg></b>
</div>
<div class="bar last">
  <i class="h first"></i>
  <b class="k"><svg><use href="#tracker"/></svg></b><b class="k off"><svg><use href="#target"/></svg></b><i class="s"></i><b class="k sub"><svg><use href="#snap"/></svg></b><b class="k off"><svg><use href="#targetp"/></svg></b><b class="k"><svg><use href="#pts"/></svg></b><b class="k off"><svg><use href="#broom"/></svg></b><i class="s"></i><b class="k"><svg><use href="#info"/></svg></b><b class="k"><svg><use href="#wrench"/></svg></b>
</div>

<main class="work">
  <aside class="left">
    <div class="dock"><span>Przeglądarka</span><svg><use href="#float"/></svg><svg><use href="#close"/></svg></div>
    <div class="mini"><svg><use href="#addlay"/></svg><svg><use href="#refresh"/></svg><svg><use href="#funnel"/></svg><svg><use href="#collapse"/></svg><svg class="tiny"><use href="#info"/></svg></div>
    <div class="browser">
      <div class="tree">
        <div class="r l0"><i class="c"></i><svg><use href="#fhome"/></svg><span>Home</span></div>
        <div class="r l0"><i class="c"></i><svg><use href="#folder"/></svg><span>C:\</span></div>
        <div class="r l0"><i class="n"></i><svg><use href="#gpkg"/></svg><span>GeoPackage</span></div>
        <div class="r l0"><i class="n"></i><svg><use href="#feather"/></svg><span>SpatiaLite</span></div>
        <div class="r l0"><i class="o"></i><svg><use href="#pg"/></svg><span>PostgreSQL</span></div>
        <div class="r l1"><i class="o"></i><svg><use href="#conn"/></svg><span>localhost</span></div>
        <div class="r l2"><i class="o"></i><svg><use href="#db"/></svg><span>public</span></div>
        <div class="r l3"><i class="c"></i><svg><use href="#tpts"/></svg><span>airports</span></div>
        <div class="r l3"><i class="c"></i><svg><use href="#tline"/></svg><span>majrivers</span></div>
        <div class="r l3"><i class="c"></i><svg><use href="#tpts"/></svg><span>popp</span></div>
        <div class="r l3"><i class="c"></i><svg><use href="#tline"/></svg><span>railroads</span></div>
        <div class="r l3"><i class="c"></i><svg><use href="#tpoly"/></svg><span>regions</span></div>
        <div class="r l3 cur"><i class="c"></i><svg><use href="#tline"/></svg><span>rivers</span></div>
        <div class="r l3"><i class="c"></i><svg><use href="#tpoly"/></svg><span>swamp</span></div>
        <div class="r l3"><i class="c"></i><svg><use href="#tpoly"/></svg><span>trees</span></div>
      </div>
      <div class="sb"><i class="up"></i><i class="th t1"></i><i class="gap"></i><i class="th t2"></i><i class="dn"></i></div>
    </div>
    <div class="hsplit"><i></i></div>
    <div class="dock d2"><span>Warstwy</span><svg><use href="#float"/></svg><svg><use href="#close"/></svg></div>
    <div class="mini m2b"><svg><use href="#brush"/></svg><svg><use href="#addgrp"/></svg><b class="sub"><svg><use href="#eye"/></svg></b><b class="sub"><svg><use href="#funnel"/></svg></b><svg><use href="#eps"/></svg><i class="a"></i><svg><use href="#expand"/></svg><svg><use href="#collapse"/></svg><svg><use href="#remlay"/></svg></div>
    <div class="layers">
      <div class="ly on"><i class="n"></i><em class="cb ck"></em><i class="ln green"></i><span>rivers</span></div>
      <div class="ly on cur"><i class="n"></i><em class="cb ck"></em><i class="pt forest"></i><span><u>Przycięte</u></span></div>
      <div class="ly on"><i class="n"></i><em class="cb ck"></em><i class="sq purple"></i><span>bristol_bay</span></div>
      <div class="ly"><i class="n"></i><em class="cb"></em><i class="ln violet"></i><span>Przycięte</span></div>
      <div class="ly"><i class="n"></i><em class="cb"></em><i class="ln tan"></i><span>railroads</span></div>
      <div class="ly"><i class="c"></i><em class="cb"></em><svg><use href="#tpoly"/></svg><span>trees</span></div>
      <div class="ly"><i class="n"></i><em class="cb"></em><i class="sq pink"></i><span>matanuska_susitna</span></div>
      <div class="ly"><i class="n"></i><em class="cb"></em><i class="pt red"></i><span>popp</span></div>
      <div class="ly"><i class="n"></i><em class="cb"></em><i class="sq lime"></i><span>regions</span></div>
      <div class="ly"><i class="n"></i><em class="cb"></em><i class="pt orange"></i><span>airports</span></div>
    </div>
  </aside>
  <div class="vsplit"><i></i></div>
  <section class="canvas">
    <svg viewBox="0 0 955 791">
      <g transform="translate(126 -8) scale(.357143 .333333)" class="geo">
        <path class="bay" d="M455 626L1351 664 1327 1397 1180 1394 80 1342 98 1328 118 1300 150 1281 176 1252 192 1223 207 1207 223 1193 243 1184 267 1156 290 1142 313 1111 344 1102 385 1103 410 1096 440 1084 463 1076 452 1060 420 1060 384 1074 358 1063 347 1044 345 1028 356 985 353 935 361 917 377 902 394 899 407 874 421 844 429 812 445 793 450 758 437 730 437 692 429 683 428 656 445 635z"/>
        <path class="riv" d="M789 276L813 248 824 207 831 206 848 229 882 225 886 255 903 259 918 230 940 216 946 197 963 196 970 176 983 158 1020 160 1028 155 1062 156 1072 165 1098 171 1118 156 1142 163 1147 146 1140 105 1134 98 1163 97 1178 73 1187 68 1195 48 1228 40 1245 24M789 276l29 3 12-13 11 1 8-10 16 4 21-5M1275 23l20 1M1325 24l40 4 34 2 20-4M1396 36L1394 80 1381 130 1385 215 1415 247 1448 290 1468 306 1498 312 1518 310M1421 30L1415 82 1404 125 1391 140 1396 195 1440 252 1478 290 1518 292M1401 36l14 34M1392 82l23 2M1384 120l20 5M1395 220l12-6M1421 246l9-10M1478 292l18 20 14-20"/>
        <path class="riv" d="M824 1180L834 1155 852 1147 853 1125 870 1120 887 1095 886 1080 886 1057 897 1040 912 1034 944 1005 958 985 970 984 984 996 1001 999 1015 1009 1041 1008 1058 992 1078 987 1116 965 1143 941 1172 936 1207 943 1240 936 1256 912 1272 906 1291 878 1303 882 1330 868 1351 870 1361 860 1376 857 1400 840 1425 837 1436 850 1463 858 1471 870 1501 876 1518 860M886 1080l14 3 14 4-14 9-13-4"/>
        <g class="pts"><ellipse cx="442" cy="671" rx="12" ry="13"/><ellipse cx="370" cy="943" rx="12" ry="13"/><ellipse cx="368" cy="971" rx="12" ry="13"/><ellipse cx="464" cy="1021" rx="12" ry="13"/><ellipse cx="601" cy="1090" rx="12" ry="13"/><ellipse cx="422" cy="1093" rx="12" ry="13"/><ellipse cx="358" cy="1111" rx="12" ry="13"/><ellipse cx="320" cy="1131" rx="12" ry="13"/><ellipse cx="887" cy="1185" rx="12" ry="13"/><ellipse cx="1140" cy="1226" rx="12" ry="13"/><ellipse cx="1000" cy="1302" rx="12" ry="13"/></g>
      </g>
    </svg>
  </section>
  <aside class="right">
    <div class="dock"><span>Algorytmy Processingu</span><svg><use href="#float"/></svg><svg><use href="#close"/></svg></div>
    <div class="mini m3b"><b class="sub"><svg><use href="#gears"/></svg></b><b class="sub"><svg><use href="#py"/></svg></b><svg><use href="#clock2"/></svg><svg><use href="#log"/></svg><i class="s"></i><svg><use href="#edsel"/></svg><i class="s"></i><svg><use href="#wrench"/></svg></div>
    <div class="find"></div>
    <div class="algs">
      <div class="r"><i class="c"></i><svg><use href="#qgis"/></svg><span>Wektor - analiza sieciowa</span></div>
      <div class="r"><i class="c"></i><svg><use href="#qgis"/></svg><span>Wektor - geometria</span></div>
      <div class="r"><i class="c"></i><svg><use href="#qgis"/></svg><span>Wektor - tabela atrybutów</span></div>
      <div class="r"><i class="c"></i><svg><use href="#qgis"/></svg><span>Wektor - tworzenie</span></div>
      <div class="r"><i class="c"></i><svg><use href="#qgis"/></svg><span>Wektor - wybór</span></div>
      <div class="r"><i class="c"></i><svg><use href="#qgis"/></svg><span>Wykresy</span></div>
      <div class="r"><i class="c"></i><svg><use href="#gdal"/></svg><span>GDAL</span></div>
      <div class="r"><i class="c"></i><svg><use href="#grass"/></svg><span>GRASS</span></div>
    </div>
  </aside>
</main>

<footer class="status">
  <div class="q"><svg viewBox="0 0 16 16"><circle cx="7" cy="6.500" r="5.500"/><path d="M11 10.500l4 5"/></svg><span>Szukana fraza (Ctrl+K)</span></div>
  <span class="msg">Włącza/wyłącza tryb edycji aktywnej warstwy</span>
  <span class="lb1">Współrzędne</span><div class="in coord">-608623&nbsp; 3020693</div>
  <svg class="mouse" viewBox="0 0 20 20"><ellipse cx="13" cy="14" rx="6.500" ry="6.500" fill="#b99"/><ellipse cx="10" cy="11" rx="6" ry="8.500" transform="rotate(-30 10 11)" fill="#fff" stroke="#111" stroke-width="1.500"/><path d="M4 3l4 7M8 1.500l3 7M3 12l12-6M0 14l4-2M14 5l4-4M17 5h3" stroke="#111" stroke-width="2"/><circle cx="12" cy="14" r="3" fill="#fff" stroke="#111" stroke-width="1.500"/></svg>
  <span class="lb2">Skala</span><div class="combo"><span>1:576994</span><i><b class="a"></b></i></div>
  <svg class="lock" viewBox="0 0 16 20"><path d="M3.500 10V6q0-4.500 4.500-4.500T12.500 6v4" fill="none" stroke="#999" stroke-width="2.400"/><rect x=".5" y="9" width="15" height="10.500" rx="1.500" fill="#606060"/></svg>
  <span class="lb3">Powiększenie</span><div class="spin"><span>100%</span><i><b class="tu"></b><b class="td"></b></i></div>
  <span class="lb4">Obrót</span><div class="spin"><span>0,0 °</span><i><b class="tu"></b><b class="td"></b></i></div>
  <em class="cb ck"></em><span class="lb5">Renderuj</span>
  <svg class="crs" viewBox="0 0 18 18"><circle cx="9" cy="9" r="8.500" fill="#666"/><path d="M1 9h16M2 5.500h14M2 12.500h14M9 1v16M5.500 2q-3 7 0 14M12.500 2q3 7 0 14" stroke="#eee" fill="none" stroke-width=".8"/></svg>
  <span class="lb6">EPSG:2964</span>
  <svg class="bub" viewBox="0 0 20 20"><ellipse cx="10" cy="9" rx="9.800" ry="8" fill="#555"/><path d="M11 16h6l2 4q-6 0-8-4z" fill="#555"/><path d="M4.500 8.500h2.500M8.800 8.500h2.500M13 8.500h2.500" stroke="#fff" stroke-width="2.200"/></svg>
</footer>

<div class="task">
  <b class="w1"><svg viewBox="0 0 20 20"><path d="M0 3l8.500-1.200v7.700H0zM9.500 1.700L20 0v9.500H9.500zM0 10.500h8.500v7.700L0 17zM9.500 10.500H20V20L9.500 18.300z" fill="#fff"/></svg></b>
  <b class="w1"><svg class="big" viewBox="0 0 28 28"><circle cx="16.500" cy="11" r="9.800" fill="none" stroke="#fff" stroke-width="2.400"/><path d="M9.500 18L1.500 27" stroke="#fff" stroke-width="2.600"/></svg></b>
  <b class="w1"><svg viewBox="0 0 20 20" fill="none" stroke="#fff" stroke-width="1.400"><path d="M1 1v3h12V1M1 6.500h12v8H1zM1 20v-3h12v3M18 0v5M18 11v9"/><path d="M16.800 7.500h2.500" stroke-width="2.500"/></svg></b>
  <b class="w2"><svg class="big" viewBox="0 0 28 28"><circle cx="14" cy="14" r="14" fill="#1ed760"/><path d="M5.500 9.500q9-3 17.500 2M6.500 14q8-2.500 15 2M7.500 18q7-2 12.500 1.500" stroke="#0a0a0a" stroke-width="2.500" fill="none" stroke-linecap="round"/></svg></b>
  <b class="w2"><svg class="big" viewBox="0 0 28 28"><path d="M7 1h21v7H7z" fill="#41a5ee"/><path d="M7 8h21v7H7z" fill="#2b7cd3"/><path d="M7 15h21v6H7z" fill="#185abd"/><path d="M7 21h21v6H7z" fill="#103f91"/><rect y="7" width="14" height="14" rx="1" fill="#185abd"/><text x="1.500" y="18" font-family="Open Sans,sans-serif" font-weight="bold" font-size="11" fill="#fff">W</text></svg></b>
  <b class="w2 run"><svg class="big" viewBox="0 0 28 28"><path d="M1 2h11l3 4H1z" fill="#d99a1e"/><path d="M1 5h26v20H1z" fill="#ffd45e"/><path d="M6 26V15h16v11h-4v-5h-8v5z" fill="#3b96dd"/></svg></b>
  <b class="w2 run"><svg class="big" viewBox="0 0 28 28"><circle cx="14" cy="14" r="14" fill="#fbc116"/><path d="M14 7h12.100A14 14 0 0 0 2 7l6 10z" fill="#e33b2e"/><path d="M2 7a14 14 0 0 0 11 21l7-11-6 3-6-3z" fill="#229342"/><circle cx="14" cy="14" r="6.800" fill="#fff"/><circle cx="14" cy="14" r="5.300" fill="#2d7df0"/></svg></b>
  <b class="w2 run multi"><svg class="big" viewBox="0 0 28 28"><path d="M14 .5a13.500 13.500 0 1 0 5 26l-5-5.500a8 8 0 1 1 8.500-7l5 4.500A13.500 13.500 0 0 0 14 .5z" fill="#679b2f"/><path d="M12 12h5l10 10v5h-4L12 16z" fill="#a5c34a"/><path d="M12 12h5l4 4-4 4-5-4z" fill="#f08a24"/></svg></b>
  <b class="w2 run multi"><svg class="big" viewBox="0 0 28 28"><rect x="1" y="1" width="26" height="26" rx="4" fill="#b30b00"/><path d="M13 6c2 0 2 3 1 6-2 5-5 9-7 9s0-3 5-4 9-2 9 0-6 0-8-5-2-6 0-6z" fill="none" stroke="#fff" stroke-width="1.600"/></svg></b>
  <b class="w2 run"><svg class="big" viewBox="0 0 28 28"><path d="M9 2l16 2-5 21-17-2z" fill="#6fb6c4"/><path d="M9 2l16 2-3 12-16-2z" fill="#c2eaf0"/><path d="M3 23l17 2 5-21 2 18-6 5z" fill="#ddd"/></svg></b>
  <b class="w3"><svg class="big" viewBox="0 0 28 28"><path d="M8 2Q18-3 22 4q5 8-4 17l-4-2q7-6 4-12-4-3-9 1z" fill="#d9440f"/><path d="M11 1l2 18M19 5l-5 15" stroke="#ddd" stroke-width="3.500"/><circle cx="7" cy="22" r="3.500" fill="none" stroke="#1e88e5" stroke-width="2.600"/><circle cx="16.500" cy="24" r="3" fill="none" stroke="#1e88e5" stroke-width="2.600"/></svg></b>
  <span class="fill"></span>
  <svg class="wx" viewBox="0 0 30 30"><path d="M12 1q6 1 5 8-1 6-9 7l-7-1Q10 10 12 1z" fill="#f7a823"/><path d="M7 29a6.500 6.500 0 0 1-1-13 8 8 0 0 1 15-2q8 0 9 8-1 7-6 7z" fill="url(#gc)"/><circle cx="22" cy="7.500" r="7.200" fill="#c42b1c"/><text x="19.500" y="11.500" font-family="Open Sans,sans-serif" font-size="11" fill="#fff">1</text></svg>
  <span class="wt">8°C&ensp;Duże zachmurz...</span>
  <div class="tray">
    <svg class="i1" viewBox="0 0 16 10"><path d="M0 9l8-8 8 8"/></svg>
    <svg class="i2" viewBox="0 0 16 18"><rect x="2" y="5" width="8" height="9" rx="1"/><path d="M10 8l4-2v7l-4-2M3 2q4-2 8 0M3 16.500q4 2 8 0"/></svg>
    <svg class="i3" viewBox="0 0 20 14"><path d="M5 13a4.500 4.500 0 0 1-1-8.500A6 6 0 0 1 14 3a5 5 0 0 1 2 10z" fill="#ddc8c8" stroke="none"/><path d="M1 10q7-5 11-1t7 4H5q-3 0-4-3z" fill="#fff" stroke="none"/></svg>
    <svg class="i4" viewBox="0 0 20 14"><path d="M4 5v7h14V4H8M19 7v3M1 1v3h4V1M3 4v3"/><path d="M7 6h6v4H7z" fill="#fff"/></svg>
    <svg class="i5" viewBox="0 0 16 16"><path d="M1 15Q1 2 15 1M5 15q0-9 10-10M9 15q0-5 6-6M13 14h2" /></svg>
    <svg class="i6" viewBox="0 0 20 16"><path d="M1 5.500h3l4-4v13l-4-4H1zM12 5l6 6M18 5l-6 6"/></svg>
  </div>
  <div class="clk">22:06<br>05.11.2023</div>
  <svg class="note" viewBox="0 0 20 20"><path d="M.7 1h18.600v15H13l-3 3-3-3H.7z"/></svg>
</div>

<div class="dlg">
  <div class="dt"><svg class="logo"><use href="#qgis"/></svg><span>Przycięte — Łącznie obiektów: 11, odfiltrowanych: 11, wybranych: 11</span><div class="dw"><svg viewBox="0 0 12 12"><path d="M0 5.500h12"/></svg><svg viewBox="0 0 12 12"><path d="M.5 .5h11v11H.5z"/></svg><svg viewBox="0 0 12 12"><path d="M0 0l12 12M12 0L0 12"/></svg></div></div>
  <div class="db"><b><svg><use href="#pen"/></svg></b><b class="off"><svg><use href="#multi"/></svg></b><b class="off"><svg><use href="#saveed"/></svg></b><b><svg><use href="#refresh"/></svg></b><i class="s"></i><b class="off"><svg><use href="#addrow"/></svg></b><b class="off"><svg><use href="#trash"/></svg></b><b class="off"><svg><use href="#cut"/></svg></b><b><svg><use href="#copy"/></svg></b><b class="off"><svg><use href="#paste"/></svg></b><i class="s"></i><b><svg><use href="#epsy"/></svg></b><b><svg><use href="#selall"/></svg></b><b><svg><use href="#invert"/></svg></b><b><svg><use href="#desel1"/></svg></b><b><svg><use href="#funnel"/></svg></b><b><svg><use href="#totop"/></svg></b><b><svg><use href="#pansel2"/></svg></b><b><svg><use href="#zsel"/></svg></b><i class="s"></i><b class="off"><svg><use href="#field"/></svg></b><b class="off"><svg><use href="#delfield"/></svg></b><b><svg><use href="#tabed"/></svg></b><b><svg><use href="#abacus"/></svg></b><i class="s"></i><b><svg><use href="#cond"/></svg></b><i class="s"></i><svg class="more" viewBox="0 0 11 10"><path d="M1 1l4 4-4 4M6 1l4 4-4 4"/></svg></div>
  <div class="dm">
    <div class="grid">
      <div class="hd"><span></span><span>gid</span><span>cat</span><span>f_codedesc</span><span>f_code</span><span>type</span></div>
      <div class="rw"><span>1</span><span>1493</span><span>1493,00000000...</span><span>Settlement</span><span>AL105</span><span>KOGGIUNG</span></div>
      <div class="rw"><span>2</span><span>1501</span><span>1501,00000000...</span><span>Building</span><span>AL015</span><span>CANNERIES</span></div>
      <div class="rw"><span>3</span><span>1503</span><span>1503,00000000...</span><span>Building</span><span>AL015</span><span>CANNERIES</span></div>
      <div class="rw"><span>4</span><span>1505</span><span>1505,00000000...</span><span>Building</span><span>AL015</span><span>CANNERIES</span></div>
      <div class="rw"><span>5</span><span>1508</span><span>1508,00000000...</span><span>Settlement</span><span>AL105</span><span>SAVONOSKI</span></div>
      <div class="rw"><span>6</span><span>1509</span><span>1509,00000000...</span><span>Settlement</span><span>AL105</span><span>SOUTH NAKNEK</span></div>
      <div class="rw"><span>7</span><span>1510</span><span>1510,00000000...</span><span>Building</span><span>AL015</span><span>CANNERIES</span></div>
      <div class="rw"><span>8</span><span>1511</span><span>1511,00000000...</span><span>Building</span><span>AL015</span><span>CANNERIES</span></div>
      <div class="rw"><span></span><span></span><span></span><span></span><span></span><span></span></div>
    </div>
    <div class="sb dsb"><i class="up"></i><i class="gap"></i><i class="th"></i><i class="dn"></i></div>
  </div>
  <div class="df"><div class="btn sub"><svg><use href="#table"/></svg><span>pokaż wszystkie obiekty</span></div><span class="fill"></span><svg><use href="#form"/></svg><b class="press"><svg><use href="#table"/></svg></b></div>
</div>
</body>
</html>
```
FILE: styles.css
```css
* { box-sizing: border-box; }
body { margin: 0; width: 1920px; height: 1080px; overflow: hidden; display: flex; flex-direction: column; background: #efefef; color: #000; font: 14px/20px "Open Sans", "Noto Sans", sans-serif; letter-spacing: -.2px; white-space: nowrap; position: relative; }
i, em, b { font-style: normal; font-weight: normal; display: block; flex: none; }
svg { display: block; flex: none; overflow: visible; }
.grads { position: absolute; width: 0; height: 0; }
.defs { display: none; }
.fill { flex: 1; }

/* title bar */
.title { flex: none; height: 29px; background: #fff; display: flex; align-items: center; color: #999; }
.title .logo { width: 20px; height: 20px; margin-left: 2px; }
.title .t { margin-left: 5px; width: 782px; letter-spacing: 0; }
.strip { width: 301px; height: 1px; background: #e2e2e2; align-self: flex-start; }
.strip b { width: 59px; height: 1px; background: #d22b2b; }
.wc { margin-left: auto; display: flex; gap: 46px; padding-right: 26px; }
.wc svg, .dw svg { width: 12px; height: 12px; fill: none; stroke: #888; }

.menu { flex: none; height: 26px; border-bottom: 2px solid #d8d8d8; display: flex; align-items: center; padding-left: 13px; color: #999; letter-spacing: -.2px; }
.menu span { flex: none; }
.menu u { text-underline-offset: 2px; text-decoration-thickness: 1px; }
.m1 { width: 65px; } .m2 { width: 60px; } .m3 { width: 61px; } .m4 { width: 74px; } .m5 { width: 90px; } .m6 { width: 69px; } .m7 { width: 66px; }
.m8 { width: 59px; } .m9 { width: 100px; } .m10 { width: 101px; } .m11 { width: 58px; } .m12 { width: 88px; }

/* toolbars */
.bar { flex: none; height: 49px; border-bottom: 1px solid #b4b4b4; display: flex; align-items: center; background: linear-gradient(#fbfbfb, #efefef); }
.bar.last { height: 47px; border-bottom: 2px solid #b8b8b8; padding-top: 2px; }
.h { width: 15px; height: 22px; margin-left: 4.4px; background: radial-gradient(circle, #b5b5b5 1px, transparent 1.2px) 6px 0 / 5px 4px; background-clip: content-box; padding: 0 3px 0 5px; }
.h.first { margin: 0 1px 0 0; }
.h.wide { margin-left: 5px; }
.h.tight { margin-left: 3.4px; }
.k { width: 41.3px; height: 40px; display: flex; align-items: center; justify-content: center; border: 1px solid transparent; border-radius: 3px; position: relative; }
.k svg { width: 28px; height: 28px; }
.k.down { background: #dcdcdc; border-color: #a8a8a8; }
.k.hot { background: #fdfdfd; border-color: #b0b0b0; }
.off > svg { filter: grayscale(.75); opacity: .38; }
.a { width: 15px; height: 5px; background: #555; clip-path: polygon(1px 0, 11px 0, 6px 5px); }
.bar .a { clip-path: polygon(2px 0, 12px 0, 7px 5px); }
.a.dim { background: #999; }
.s { width: 8.8px; height: 24px; border-left: 1px solid #ccc; transform: translateX(4px); }
.sub { position: relative; }
.sub::after { content: ""; position: absolute; right: 1px; bottom: 1px; border: 3px solid transparent; border-top: 4px solid #555; border-bottom: 0; }
.off.sub::after { border-top-color: #999; }

/* work area */
.work { flex: none; height: 796px; display: flex; }
.left { flex: none; width: 364px; display: flex; flex-direction: column; }
.dock { flex: none; height: 30px; display: flex; align-items: center; padding: 0 1px 1px 5px; gap: 4px; letter-spacing: 0; }
.dock span { flex: 1; }
.dock svg { width: 14px; height: 14px; }
.mini { flex: none; height: 34px; display: flex; align-items: center; padding: 0 0 5px 9px; gap: 12px; }
.mini svg { width: 20px; height: 20px; }
.mini svg.tiny { width: 17px; height: 17px; }
.browser { flex: none; height: 337px; border: 1px solid #b0b0b0; border-right: 0; background: #fff; display: flex; overflow: hidden; }
.tree { flex: 1; padding-top: 1px; letter-spacing: -.1px; }
.r { height: 22.47px; display: flex; align-items: center; }
.r svg { width: 19px; height: 19px; margin-right: 8px; }
.c, .o, .n { width: 9px; height: 9px; margin-right: 8px; }
.c { background: #555; clip-path: polygon(0 0, 5px 4.500px, 0 9px); }
.o { background: #555; clip-path: polygon(0 2px, 9px 2px, 4.500px 7px); }
.r.l0 { padding-left: 7px; } .r.l0 i { margin-right: 9px; }
.r.l1 { padding-left: 26px; } .r.l2 { padding-left: 46px; } .r.l3 { padding-left: 67px; }
.r .o { transform: translateX(-1px); }
.r.l1 i { margin-right: 10px; } .r.l2 i { margin-right: 10px; }
.r.l3 i { margin-right: 9px; }
.r.l1 svg { width: 17px; height: 17px; margin-right: 10px; }
.r.l2 svg { width: 17px; margin-right: 10px; }
.r.cur { width: 227px; background: #efefef; }
.sb { flex: none; width: 18px; display: flex; flex-direction: column; border-left: 1px solid #c4c4c4; background: linear-gradient(90deg, #f2f2f2, #fff); }
.sb i { width: 100%; }
.up, .dn { height: 17px; background: #fafafa; display: flex; align-items: center; justify-content: center; }
.up::after, .dn::after { content: ""; border: 5px solid transparent; }
.up::after { border-bottom-color: #555; border-top: 0; }
.dn::after { border-top-color: #555; border-bottom: 0; }
.sb .gap { flex: 1; }
.th { background: #e6e6e6; border-top: 1px solid #b8b8b8; border-bottom: 1px solid #b8b8b8; }
.t1 { height: 53px; } .t2 { height: 104px; }
.hsplit { flex: none; height: 9px; display: flex; justify-content: center; align-items: center; }
.hsplit i { width: 20px; height: 2px; background: repeating-linear-gradient(90deg, #bbb 0 1px, transparent 1px 4px); }
.d2 { height: 28px; padding-bottom: 4px; }
.m2b { height: 35px; gap: 11.8px; padding-bottom: 6px; }
.mini b svg { margin: 0; }
.mini .sub::after { right: -2px; bottom: 0; }
.mini .a { width: 12px; margin: 0 -4px 0 -6px; }
.layers { flex: 1; background: #fff; border-left: 1px solid #b0b0b0; border-bottom: 1px solid #b0b0b0; padding-top: 1px; }
.ly { height: 22.5px; display: flex; align-items: center; padding-left: 9px; font-weight: bold; font-style: italic; color: #7b7b7b; letter-spacing: .4px; }
.ly.on { color: #000; font-style: normal; letter-spacing: 0; }
.ly.cur { background: #efefef; }
.ly .c, .ly .n { margin-right: 11px; }
.ly u { text-underline-offset: 2px; }
.cb { width: 17px; height: 17px; border: 1px solid #b0b0b0; background: #fff; position: relative; }
.ck::after { content: ""; position: absolute; left: 5px; top: 1px; width: 5px; height: 10px; border: solid #000; border-width: 0 2.500px 2.500px 0; transform: rotate(38deg); }
.ln, .sq, .ly svg, .pt { width: 20px; height: 20px; margin: 0 8px; }
.ln { height: 2px; }
.pt { width: 11px; height: 11px; border-radius: 50%; border: 1px solid #444; margin: 0 13px 0 12px; }
.sq { border: 1px solid #333; }
.green { background: #82b46c; } .violet { background: #987db7; } .tan { background: #beb297; }
.forest { background: #6a9a68; } .red { background: #b7484b; } .orange { background: #e8714b; }
.purple { background: #8d5a99; } .pink { background: #e15989; } .lime { background: #85b66f; }
.vsplit { flex: none; width: 10px; display: flex; justify-content: center; }
.vsplit i { width: 2px; height: 20px; margin-top: 393px; background: repeating-linear-gradient(#bbb 0 1px, transparent 1px 4px); }
.canvas { flex: none; width: 955px; margin-top: 3px; background: #fff; border-bottom: 1px solid #b0b0b0; overflow: hidden; }
.canvas > svg { width: 955px; height: 791px; overflow: hidden; }
.geo * { vector-effect: non-scaling-stroke; }
.bay { fill: #8d5a99; stroke: #232323; stroke-width: 1.2; }
.riv { fill: none; stroke: #7bb068; stroke-width: 1.1; }
.pts ellipse { fill: #ff0; stroke: #3a3a10; stroke-width: 1.1; }
.right { flex: none; width: 582px; margin-left: 9px; display: flex; flex-direction: column; }
.right .dock { padding-left: 4px; padding-right: 2px; letter-spacing: .12px; }
.m3b { height: 35px; padding-left: 9px; gap: 11px; padding-bottom: 6px; }
.m3b .s { width: 1px; height: 14px; margin: 0 -1px; transform: none; }
.find { flex: none; height: 26px; border: 1px solid #aaa; border-radius: 2px; background: #fff; margin: 0 1px; }
.algs { flex: 1; background: #fff; border-left: 1px solid #b0b0b0; border-bottom: 1px solid #b0b0b0; padding: 430px 0 0 11px; letter-spacing: .1px; }
.algs .c { margin-right: 9px; }

/* status bar */
.status { flex: none; height: 35px; margin-top: -1px; display: flex; align-items: center; padding-left: 5px; letter-spacing: -.38px; }
.status > * { flex: none; }
.q, .in, .combo, .spin { height: 27px; border: 1px solid #aaa; border-radius: 3px; background: #fff; display: flex; align-items: center; }
.q { width: 250px; padding-left: 10px; color: #7d7d7d; font-size: 13px; gap: 9px; }
.q svg { width: 16px; height: 16px; fill: none; stroke: #777; stroke-width: 1.500; }
.msg { width: 631px; padding-left: 10px; letter-spacing: -.34px; }
.lb1 { width: 92px; padding-left: 9px; }
.coord { width: 130px; padding-left: 8px; }
.mouse { width: 20px; height: 20px; margin: 0 16px 0 6px; }
.lb2 { width: 36px; }
.combo { width: 96px; padding-left: 5px; }
.combo span { flex: 1; }
.combo i { width: 25px; height: 25px; border-left: 1px solid #aaa; background: linear-gradient(#fff, #e8e8e8); display: flex; align-items: center; padding-left: 5px; }
.lock { width: 16px; height: 20px; margin: 0 11px 0 15px; }
.lb3 { width: 84px; }
.spin { width: 101px; padding-left: 5px; }
.spin span { flex: 1; }
.spin i { width: 18px; height: 25px; border-left: 1px solid #bbb; display: flex; flex-direction: column; align-items: center; justify-content: center; gap: 5px; }
.tu, .td { width: 10px; height: 5px; background: #555; clip-path: polygon(0 5px, 5px 0, 10px 5px); }
.td { clip-path: polygon(0 0, 10px 0, 5px 5px); }
.lb4 { width: 57px; padding-left: 11px; }
.status .cb { margin: 0 7px 0 8px; }
.lb5 { width: 74px; }
.crs { width: 19px; height: 19px; margin-right: 3px; }
.lb6 { width: 96px; }
.bub { width: 20px; height: 20px; }

/* taskbar */
.task { flex: none; height: 50px; display: flex; align-items: center; color: #fff; background: linear-gradient(90deg, #3a0508, #560b0d 90px, #5a0c0e 180px, #4a0a14 270px, #5a0d10 350px, #5a0c0f 460px, #400a14 570px, #5a0c0f 640px, #35050a 850px, #5a0c0f 910px, #5e0e11 1180px, #50222a 1240px, #4f1d22 1350px, #5a0c0f 1410px, #5c0d10 1840px, #380608 1920px); }
.task b { height: 50px; display: flex; align-items: center; justify-content: center; border-bottom: 3px solid transparent; padding-top: 2px; }
.task b svg { width: 20px; height: 20px; }
.task b svg.big { width: 28px; height: 28px; }
.w1 { width: 60px; }
.w2 { width: 52px; margin-left: 10px; }
.w1 + .w2 { margin-left: 8px; }
.task .run { border-bottom-color: #ffabab; }
.task .multi { border-bottom-color: transparent; background: linear-gradient(90deg, #ffabab 41px, #a87878 41px) 0 100% / 100% 3px no-repeat border-box; }
.task .w3 { width: 61px; margin-left: 6px; background: #8f1719; border-bottom-color: #ffabab; }
.wx { width: 30px; height: 30px; margin-right: 9px; }
.wt { width: 204px; font-size: 17px; letter-spacing: .05px; }
.tray { display: flex; align-items: center; width: 172px; }
.tray svg { fill: none; stroke: #fff; stroke-width: 1.200; }
.i1 { width: 16px; height: 10px; } .i2 { width: 16px; height: 18px; margin-left: 16px; } .i3 { width: 20px; height: 14px; margin-left: 10px; }
.i4 { width: 20px; height: 14px; margin-left: 11px; } .i5 { width: 16px; height: 16px; margin-left: 12px; } .i6 { width: 20px; height: 16px; margin-left: 11px; }
.clk { width: 87px; text-align: center; line-height: 23px; letter-spacing: -.3px; }
.note { width: 20px; height: 20px; margin: 0 31px 0 15px; fill: none; stroke: #fff; stroke-width: 1.300; }

/* attribute table window, floating over the map */
.dlg { position: absolute; left: 1041px; top: 271px; width: 773px; height: 450px; border: 1px solid #9a9a9a; background: #efefef; display: flex; flex-direction: column; box-shadow: 0 3px 18px rgba(0,0,0,.35); }
.dt { flex: none; height: 37px; background: #fff; display: flex; align-items: center; padding-left: 9px; color: #999; letter-spacing: .06px; }
.dt .logo { width: 20px; height: 20px; margin-right: 9px; }
.dw { margin-left: auto; display: flex; gap: 46.500px; padding-right: 24px; }
.db { flex: none; height: 40px; display: flex; align-items: center; padding: 0 0 2px 4.500px; }
.db b { width: 31px; height: 28px; display: flex; align-items: center; justify-content: center; }
.db svg { width: 19px; height: 19px; }
.db .s { width: 10px; height: 14px; }
.db svg.more { width: 11px; height: 10px; margin-left: 20px; fill: none; stroke: #333; stroke-width: 1.700; }
.dm { flex: none; height: 334px; display: flex; background: #fff; }
.grid { flex: 1; overflow: hidden; background: linear-gradient(#efefef 25px, #fff 25px); }
.hd, .rw { display: grid; grid-template-columns: 23px repeat(5, 125px); width: 648px; }
.hd { height: 25px; }
.hd span { text-align: center; background: linear-gradient(#fff, #ececec); border-right: 1px solid #c4c4c4; border-bottom: 1px solid #aaa; line-height: 27px; padding-left: 1px; }
.hd span:first-child { border-right: 0; }
.rw { height: 37.5px; color: #fff; letter-spacing: 0; }
.rw span { background: #0078d7; border-right: 1px solid #c8c8c8; border-bottom: 1px solid #c8c8c8; box-shadow: inset 1px 1px #fff; line-height: 37px; padding: 0 3px 0 4px; overflow: hidden; }
.rw span:nth-child(2), .rw span:nth-child(3) { text-align: right; }
.rw span:nth-child(4) { letter-spacing: -.15px; }
.rw span:nth-child(6) { letter-spacing: .25px; }
.rw span:first-child { background: linear-gradient(#fdfdfd, #eaeaea); color: #000; border-color: #aaa; box-shadow: none; }
.dsb { width: 19px; border-right: 2px solid #ccc; }
.dsb .th { height: 84px; }
.df { flex: none; height: 37px; display: flex; align-items: center; padding: 0 3px 0 4px; }
.btn { width: 175px; height: 28px; border: 1px solid #a8a8a8; border-radius: 3px; background: linear-gradient(#fff, #ececec); display: flex; align-items: center; padding-left: 4px; gap: 3px; font-size: 13px; letter-spacing: -.6px; }
.df svg { width: 18px; height: 18px; }
.btn.sub::after { right: 3px; bottom: 4px; }
.press { width: 30px; height: 29px; margin-left: 6px; border: 1px solid #a8a8a8; border-radius: 3px; background: #dcdcdc; display: flex; align-items: center; justify-content: center; }
```
